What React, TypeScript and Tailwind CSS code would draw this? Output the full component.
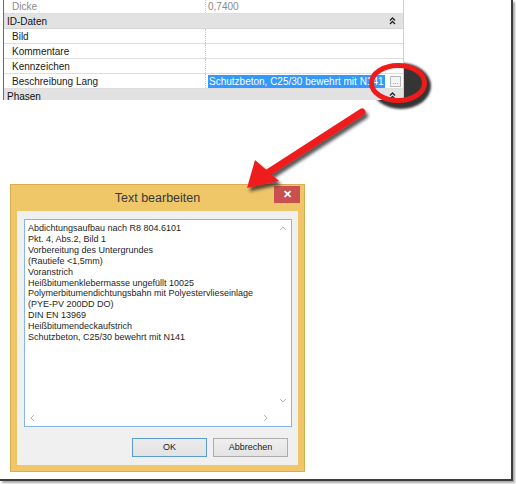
import type { ReactNode } from "react";

const UI = "font-['Liberation_Sans',Arial,sans-serif]";

function DoubleUp() {
  return (
    <svg width="7" height="8" viewBox="0 0 7 8" className="shrink-0">
      <polyline points="1,3.5 3.5,1 6,3.5" fill="none" stroke="#222" strokeWidth="1.3" />
      <polyline points="1,7 3.5,4.5 6,7" fill="none" stroke="#222" strokeWidth="1.3" />
    </svg>
  );
}

function Category({ label }: { label: string }) {
  return (
    <div className="flex h-[15px] items-center justify-between border-b border-[#d4d4d4] bg-[#e2e2e2] pl-[3px] pr-[7px] text-[10px] text-[#111]">
      <span>{label}</span>
      <DoubleUp />
    </div>
  );
}

function Row({ label, value, muted }: { label: string; value?: ReactNode; muted?: boolean }) {
  return (
    <div className={`flex h-[15px] items-center border-b border-[#dedede] text-[10px] ${muted ? "text-[#8a8a8a]" : "text-[#1a1a1a]"}`}>
      <div className="w-[201px] pl-[8px]">{label}</div>
      <div className="flex h-full flex-1 items-center border-l border-dotted border-[#c8c8c8] pl-[2px]">{value}</div>
    </div>
  );
}

function Chevron({ dir }: { dir: "up" | "down" | "left" | "right" }) {
  const pts = {
    up: "1,5 4,2 7,5",
    down: "1,2 4,5 7,2",
    left: "5,1 2,4 5,7",
    right: "2,1 5,4 2,7",
  }[dir];
  return (
    <svg width="8" height="8" viewBox="0 0 8 8">
      <polyline points={pts} fill="none" stroke="#b5b5b5" strokeWidth="1" />
    </svg>
  );
}

const lines = [
  "Abdichtungsaufbau nach R8 804.6101",
  "Pkt. 4, Abs.2, Bild 1",
  "Vorbereitung des Untergrundes",
  "(Rautiefe <1,5mm)",
  "Voranstrich",
  "Heißbitumenklebermasse ungefüllt 10025",
  "Polymerbitumendichtungsbahn mit Polyestervlieseinlage",
  "(PYE-PV 200DD DO)",
  "DIN EN 13969",
  "Heißbitumendeckaufstrich",
  "Schutzbeton, C25/30 bewehrt mit N141",
];

function EditDialog() {
  return (
    <div className="ml-[10px] mt-[84px] flex h-[288px] w-[295px] flex-col border border-[#d9ad52] bg-[#efc668]">
      <div className="relative flex h-[26px] items-center justify-center text-[12.5px] text-[#3a3a3a]">
        Text bearbeiten
        <div className="absolute right-[4px] top-[1px] flex h-[17px] w-[26px] items-center justify-center bg-[#c9504f] text-[11px] font-bold text-white">
          ✕
        </div>
      </div>
      <div className="mx-[6px] mb-[6px] flex flex-1 flex-col bg-[#f0f0f0] px-[7px] pb-[8px] pt-[8px]">
        <div className="mr-[-1px] flex h-[208px] flex-col border border-[#86b6e6] bg-white">
          <div className="flex flex-1">
            <div className="flex-1 pl-[3px] pt-[3px] text-[9px] leading-[10.9px] text-[#1e1e1e]">
              {lines.map((l) => (
                <div key={l} className="whitespace-nowrap">{l}</div>
              ))}
            </div>
            <div className="flex w-[17px] flex-col items-center justify-between py-[5px]">
              <Chevron dir="up" />
              <Chevron dir="down" />
            </div>
          </div>
          <div className="flex h-[16px] items-center">
            <div className="flex flex-1 items-center justify-between px-[4px]">
              <Chevron dir="left" />
              <Chevron dir="right" />
            </div>
            <div className="w-[17px]" />
          </div>
        </div>
        <div className="mt-[11px] flex justify-end gap-[6px] pr-[3px] text-[9px] text-[#1a1a1a]">
          <div className="flex h-[19px] w-[75px] items-center justify-center border border-[#5a9bd8] bg-gradient-to-b from-[#ececec] to-[#e2e2e2]">
            OK
          </div>
          <div className="flex h-[19px] w-[75px] items-center justify-center border border-[#adadad] bg-gradient-to-b from-[#efefef] to-[#e3e3e3]">
            Abbrechen
          </div>
        </div>
      </div>
    </div>
  );
}

export default function App() {
  return (
    <div className={`h-[484px] w-[516px] overflow-hidden bg-white ${UI}`}>
      <div className="relative h-[481px] w-[513px] overflow-hidden border-b-2 border-r-2 border-[#3d3d3d] bg-white shadow-[2px_2px_2px_rgba(0,0,0,0.35)]">
        {/* shadow blob under the marker ring, hidden by the grid where it overlaps */}
        <svg className="absolute left-0 top-0 z-0" width="513" height="481">
          <defs>
            <filter id="blob" x="-20%" y="-20%" width="140%" height="140%">
              <feGaussianBlur stdDeviation="1" />
            </filter>
          </defs>
          <ellipse cx="401" cy="86" rx="30" ry="23" fill="#363636" filter="url(#blob)" />
        </svg>

        {/* property grid */}
        <div className="relative z-10 ml-[3px] mt-[-1px] h-[101px] w-[401px] overflow-hidden border-l border-r border-l-[#6a6a6a] border-r-[#d0d0d0] bg-white">
          <Row label="Dicke" value="0,7400" muted />
          <Category label="ID-Daten" />
          <Row label="Bild" />
          <Row label="Kommentare" />
          <Row label="Kennzeichen" />
          <Row
            label="Beschreibung Lang"
            value={
              <div className="flex w-full items-center justify-between pr-[2px]">
                <span className="bg-[#3399ff] px-[1px] leading-[13px] text-white">Schutzbeton, C25/30 bewehrt mit N141</span>
                <span className="flex h-[11px] w-[11px] items-end justify-center border border-[#b8b8b8] bg-[#f4f4f4] pb-[1px] text-[7px] leading-[6px] text-[#666]">
                  ...
                </span>
              </div>
            }
          />
          <Category label="Phasen" />
        </div>

        <EditDialog />

        {/* callout marks drawn over the screen capture */}
        <svg className="pointer-events-none absolute left-0 top-0 z-20" width="513" height="481">
          <defs>
            <filter id="drop" x="-20%" y="-20%" width="140%" height="140%">
              <feDropShadow dx="2.5" dy="3.5" stdDeviation="1.5" floodColor="#222" floodOpacity="0.75" />
            </filter>
          </defs>
          <ellipse cx="398" cy="83" rx="26.5" ry="17.5" fill="none" stroke="#ee1b1b" strokeWidth="5" />
          <g filter="url(#drop)" fill="#ee1b1b">
            <line x1="362" y1="112" x2="266" y2="174" stroke="#ee1b1b" strokeWidth="7" strokeLinecap="round" />
            <polygon points="247,188 255,160 279,181" />
          </g>
        </svg>
      </div>
    </div>
  );
}
